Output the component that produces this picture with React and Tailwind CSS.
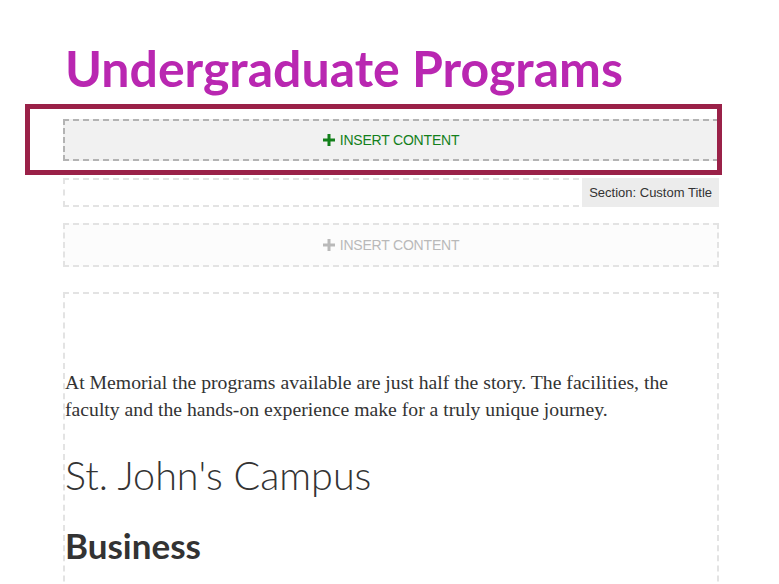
import React from "react";

const Plus = ({ className }) => (
  <svg viewBox="0 0 12 12" className={className} fill="currentColor">
    <rect x="4.5" y="0" width="3" height="12" />
    <rect x="0" y="4.5" width="12" height="3" />
  </svg>
);

const InsertButton = ({ active }) => (
  <div
    className={`flex items-center justify-center gap-[5px] border-2 border-dashed ${
      active
        ? "h-[42px] border-[#b3b3b3] bg-[#f1f1f1] text-[#13801b]"
        : "h-[44px] border-[#e3e3e3] bg-[#fcfcfc] text-[#b9b9b9]"
    }`}
  >
    <Plus className="h-[12px] w-[12px]" />
    <span className="text-[14px] leading-none tracking-[-0.2px] font-['Liberation_Sans',Arial,sans-serif]">
      INSERT CONTENT
    </span>
  </div>
);

const App = () => {
  return (
    <div className="min-h-[584px] w-[779px] overflow-hidden bg-white">
      <div className="ml-[63px] w-[656px] pt-[40px]">
        <h1 className="text-[50px] leading-[56px] font-bold text-[#b927b1] font-['Lato',sans-serif] pl-[2px]">
          Undergraduate Programs
        </h1>

        <div className="relative mt-[23px]">
          <InsertButton active />
          <div className="pointer-events-none absolute -left-[38px] -right-[3px] -top-[15px] -bottom-[14px] border-[5px] border-[#9a2148]" />
        </div>

        <div className="mt-[17px] flex h-[29px] justify-end border-2 border-dashed border-[#e3e3e3]">
          <div className="-mt-[2px] -mr-[2px] flex h-[29px] items-center bg-[#ececec] px-[7px] text-[13px] text-[#333] font-['Liberation_Sans',Arial,sans-serif]">
            Section: Custom Title
          </div>
        </div>

        <div className="mt-[16px]">
          <InsertButton />
        </div>

        <div className="mt-[25px] h-[320px] border-2 border-b-0 border-dashed border-[#e3e3e3] pt-[75px] text-[#333]">
          <p className="max-w-[640px] text-[19.7px] leading-[27px] font-['Liberation_Serif',Georgia,serif]">
            At Memorial the programs available are just half the story. The facilities, the faculty and the hands-on experience make for a truly unique journey.
          </p>
          <h2 className="mt-[28px] text-[39.5px] leading-[47px] font-light font-['Lato',sans-serif]">
            St. John's Campus
          </h2>
          <h3 className="mt-[27px] text-[35px] leading-[41px] font-bold font-['Lato',sans-serif]">
            Business
          </h3>
        </div>
      </div>
    </div>
  );
};

export default App;
